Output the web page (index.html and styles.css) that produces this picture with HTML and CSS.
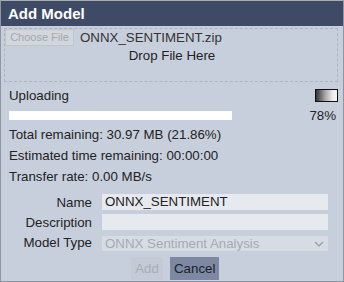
FILE: index.html
```html
<!DOCTYPE html>
<html>
<head>
<meta charset="utf-8">
<link rel="stylesheet" href="styles.css">
</head>
<body>
<div class="dialog">
  <div class="title">Add Model</div>
  <div class="drop">
    <div class="file-row">
      <span class="choose">Choose File</span>
      <span class="fname">ONNX_SENTIMENT.zip</span>
    </div>
    <div class="drop-text">Drop File Here</div>
  </div>
  <div class="progress">
    <div class="prog-head">
      <span>Uploading</span>
      <span class="icon"></span>
    </div>
    <div class="prog-row">
      <div class="bar"></div>
      <span class="pct">78%</span>
    </div>
    <div class="stat">Total remaining: 30.97 MB (21.86%)</div>
    <div class="stat">Estimated time remaining: 00:00:00</div>
    <div class="stat">Transfer rate: 0.00 MB/s</div>
  </div>
  <div class="form">
    <label class="lbl">Name</label>
    <div class="input">ONNX_SENTIMENT</div>
    <label class="lbl">Description</label>
    <div class="input"></div>
    <label class="lbl">Model Type</label>
    <div class="select"><span>ONNX Sentiment Analysis</span><svg width="10" height="6" viewBox="0 0 10 6"><path d="M1 1 L5 5 L9 1" fill="none" stroke="#999" stroke-width="1.2"/></svg></div>
  </div>
  <div class="buttons">
    <button class="btn add" disabled>Add</button>
    <button class="btn cancel">Cancel</button>
  </div>
</div>
</body>
</html>
```
FILE: styles.css
```css
html, body { margin: 0; padding: 0; }
body { font-family: "Liberation Sans", Arial, sans-serif; font-size: 13.3px; color: #222; }
.dialog {
  width: 344px; height: 282px; box-sizing: border-box;
  border: 1px solid #8e96a4; border-top-color: #a9aeb6;
  background: #c8cfdc;
  display: flex; flex-direction: column;
}
.title {
  background: #3e4a66; color: #fff; font-weight: bold; font-size: 15px;
  height: 25px; line-height: 26px; padding-left: 7px;
}
.drop {
  margin: 2px 5px 0 3px; height: 52px;
  border: 1px dashed #aeb4be;
  display: flex; flex-direction: column;
}
.file-row { display: flex; align-items: center; gap: 6px; height: 17px; }
.choose {
  box-sizing: border-box; font-size: 11px; color: #a3a8b0; white-space: nowrap;
  background: #d2d6dd; border: 1px solid #c0c5cc;
  height: 17px; width: 69px; line-height: 15px; text-align: center;
}
.fname { color: #333; }
.drop-text { text-align: center; margin-top: 2px; color: #222; padding-left: 2px; }
.progress { padding: 6px 5px 0 8px; display: flex; flex-direction: column; }
.prog-head { display: flex; justify-content: space-between; align-items: flex-start; height: 17px; }
.icon {
  width: 21px; height: 11px; border: 1px solid #111; margin-top: 1px;
  background: linear-gradient(to right, #333, #aaa 45%, #eee 80%, #f4f4f4);
}
.prog-row { display: flex; justify-content: space-between; align-items: flex-start; height: 19px; }
.bar { width: 223px; height: 9px; background: #fff; margin-top: 6px; }
.pct { padding-right: 2px; margin-top: 3px; line-height: 15px; }
.stat { height: 21px; line-height: 21px; }
.form {
  display: grid; grid-template-columns: 92px 226px; column-gap: 9px; row-gap: 4px;
  margin-top: 7px; align-items: center;
}
.lbl { text-align: right; padding-right: 1px; }
.input {
  height: 16px; background: #e6e9ee; line-height: 16px; padding-left: 3px; color: #222;
}
.select {
  height: 15px; background: #d7dce4; color: #a5aab2; line-height: 15px; padding: 0 4px 0 3px;
  display: flex; justify-content: space-between; align-items: center; margin-top: 2px;
}
.buttons { display: flex; justify-content: center; gap: 7px; margin-top: 6px; padding-left: 6px; }
.btn {
  font-family: inherit; font-size: 13.3px; height: 23px; border: 0; padding: 0 4px;
}
.add { background: #c4cbd6; color: #a7adb6; width: 32px; }
.cancel { background: #7d88a3; color: #1a1f2a; width: 49px; }
```
